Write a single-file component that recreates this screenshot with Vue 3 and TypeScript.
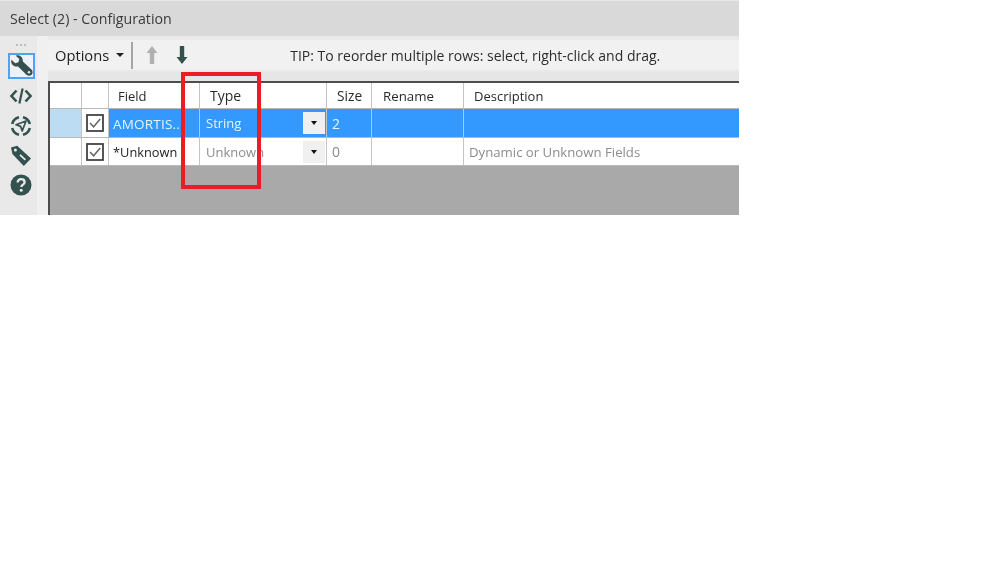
<script setup lang="ts">
interface Row {
  field: string
  type: string
  size: string
  description: string
  selected: boolean
}

const rows: Row[] = [
  { field: 'AMORTIS...', type: 'String', size: '2', description: '', selected: true },
  { field: '*Unknown', type: 'Unknown', size: '0', description: 'Dynamic or Unknown Fields', selected: false },
]
</script>

<template>
  <div class="panel">
    <div class="title">Select (2) - Configuration</div>
    <div class="body">
      <div class="rail">
        <div class="grip">
          <i></i><i></i><i></i>
        </div>
        <button class="tool active">
          <svg width="24" height="24" viewBox="0 0 24 24">
            <path d="M1.5 5.5 L5.5 9 L8.8 8 L9.8 4.6 L6 1.2 C9.6 -0.2 13.8 2.4 13.4 7.4 L22.4 15.6 C24 17.2 24 19.6 22.6 21 C21 22.6 18.6 22.4 17.2 21 L8.4 12.4 C3.8 13.4 0.2 9.8 1.5 5.5 Z" fill="#33514e" />
            <circle cx="19.8" cy="18.4" r="1.3" fill="#e9e9e9" />
          </svg>
        </button>
        <button class="tool">
          <svg width="24" height="20" viewBox="0 0 24 20" fill="none" stroke="#33514e" stroke-width="2.6">
            <path d="M7.5 4.5 L2.5 10 L7.5 15.5" />
            <path d="M16.5 4.5 L21.5 10 L16.5 15.5" />
            <path d="M13.6 2.5 L10.4 17.5" stroke-width="2.2" />
          </svg>
        </button>
        <button class="tool">
          <svg width="24" height="24" viewBox="0 0 24 24" fill="none" stroke="#33514e">
            <path d="M3.2 10 A9 9 0 0 1 10 3.2 M14 3.2 A9 9 0 0 1 20.8 10 M20.8 14 A9 9 0 0 1 14 20.8 M10 20.8 A9 9 0 0 1 3.2 14" stroke-width="2.6" />
            <path d="M17 7 L13.2 17 L11.6 12.4 L7 10.8 Z" fill="none" stroke-width="1.7" stroke-linejoin="round" />
          </svg>
        </button>
        <button class="tool">
          <svg width="24" height="24" viewBox="0 0 24 24">
            <path d="M2 3.5 L8.2 1.8 L22 14.4 L14.8 22 L3.4 10 Z" fill="#33514e" />
            <path d="M11 10.8 L16.4 15.8" stroke="#e9e9e9" stroke-width="1.8" />
            <circle cx="6.4" cy="6" r="1.5" fill="#e9e9e9" />
          </svg>
        </button>
        <button class="tool help">
          <svg width="22" height="22" viewBox="0 0 22 22">
            <circle cx="11" cy="11" r="10.5" fill="#33514e" />
            <path d="M7.6 8.6 C7.6 6.4 9.2 5.2 11.1 5.2 C13.1 5.2 14.6 6.4 14.6 8.2 C14.6 10.6 11.3 10.6 11.3 13" fill="none" stroke="#e9e9e9" stroke-width="2.3" />
            <circle cx="11.2" cy="16.2" r="1.5" fill="#e9e9e9" />
          </svg>
        </button>
      </div>
      <div class="rail-gap"></div>
      <div class="main">
        <div class="toolbar">
          <span class="options">Options</span>
          <span class="caret"></span>
          <span class="sep"></span>
          <svg class="arrow" width="12" height="20" viewBox="0 0 12 20">
            <path d="M6 1 L11.5 8 L8.2 8 L8.2 19 L3.8 19 L3.8 8 L0.5 8 Z" fill="#b0b0b0" />
          </svg>
          <svg class="arrow" width="12" height="20" viewBox="0 0 12 20">
            <path d="M6 19 L11.5 12 L8.2 12 L8.2 1 L3.8 1 L3.8 12 L0.5 12 Z" fill="#33514e" />
          </svg>
          <span class="tip">TIP: To reorder multiple rows: select, right-click and drag.</span>
        </div>
        <div class="strip"></div>
        <div class="table">
          <div class="tr head">
            <div class="c"></div>
            <div class="c"></div>
            <div class="c field">Field</div>
            <div class="c type">Type</div>
            <div class="c size">Size</div>
            <div class="c rename">Rename</div>
            <div class="c desc">Description</div>
          </div>
          <div v-for="row in rows" :key="row.field" class="tr" :class="{ selected: row.selected }">
            <div class="c marker"></div>
            <div class="c check">
              <svg width="18" height="18" viewBox="0 0 18 18">
                <rect x="1" y="1" width="16" height="16" fill="#fff" stroke="#444" stroke-width="1.8" />
                <path d="M4 9 L7.6 12.8 L14.2 5" fill="none" stroke="#666" stroke-width="1.5" />
              </svg>
            </div>
            <div class="c field-val">{{ row.field }}</div>
            <div class="c type-val">
              <span>{{ row.type }}</span>
              <span class="drop"><b></b></span>
            </div>
            <div class="c size-val">{{ row.size }}</div>
            <div class="c"></div>
            <div class="c desc-val">{{ row.description }}</div>
          </div>
          <div class="empty"></div>
        </div>
      </div>
    </div>
    <div class="highlight"></div>
  </div>
</template>

<style scoped>
.panel {
  position: relative;
  width: 739px;
  height: 215px;
  background: #e9e9e9;
  font-family: "Open Sans", "Noto Sans", sans-serif;
  font-size: 13px;
  color: #222;
  display: flex;
  flex-direction: column;
  overflow: hidden;
  filter: blur(0.35px);
}

.title {
  height: 35px;
  margin-top: 1px;
  padding-left: 10px;
  background: #d9d9d9;
  color: #3a3a3a;
  font-size: 14.2px;
  line-height: 35px;
  flex: none;
}

.body {
  flex: 1;
  display: flex;
  min-height: 0;
}

.rail {
  width: 37px;
  flex: none;
  box-sizing: border-box;
  padding-top: 6px;
  padding-left: 5px;
  display: flex;
  flex-direction: column;
  align-items: center;
}

.grip {
  display: flex;
  gap: 2px;
  height: 11px;
}

.grip i {
  width: 2px;
  height: 2px;
  margin-top: 2px;
  background: #bdbdbd;
}

.tool {
  width: 27px;
  height: 26px;
  flex: none;
  margin-bottom: 4px;
  padding: 0;
  border: 1px solid transparent;
  background: none;
  display: flex;
  align-items: center;
  justify-content: center;
}

.tool.active {
  border: 2px solid #4da3f5;
  background: #eef2f6;
}

.tool.help {
  margin-top: -1px;
}

.rail-gap {
  width: 11px;
  flex: none;
  background: #f0f0f0;
}

.main {
  flex: 1;
  min-width: 0;
  display: flex;
  flex-direction: column;
}

.toolbar {
  height: 30px;
  margin-top: 4px;
  padding-left: 7px;
  background: #f1f1f1;
  display: flex;
  align-items: center;
  flex: none;
}

.options {
  font-size: 14.7px;
}

.caret {
  margin-left: 7px;
  border: 4px solid transparent;
  border-top: 4px solid #222;
  border-bottom: none;
}

.sep {
  width: 2px;
  height: 27px;
  margin-left: 7px;
  margin-right: 13px;
  background: #a6a6a6;
}

.arrow {
  margin-right: 18px;
}

.tip {
  margin-left: 84px;
  font-size: 14px;
  color: #2c2c2c;
}

.strip {
  height: 9px;
  margin-top: 2px;
  background: #e6e6e6;
  border-bottom: 2px solid #4d4d4d;
  box-sizing: content-box;
  flex: none;
}

.table {
  flex: 1;
  display: flex;
  flex-direction: column;
  border-left: 2px solid #4d4d4d;
  background: #a9a9a9;
}

.tr {
  display: grid;
  grid-template-columns: 32px 27px 91px 127px 45px 92px 1fr;
  height: 28px;
  flex: none;
  background: #fff;
  border-bottom: 1px solid #b9b9b9;
  box-sizing: border-box;
}

.tr.head {
  height: 26px;
}

.tr.selected {
  height: 29px;
}

.c {
  border-right: 1px solid #c4c4c4;
  display: flex;
  align-items: center;
  min-width: 0;
  white-space: nowrap;
}

.c:last-child {
  border-right: none;
}

.field { padding-left: 9px; }
.type { padding-left: 10px; font-size: 14px; }
.size { padding-left: 10px; font-size: 13.7px; }
.rename { padding-left: 11px; font-size: 13.3px; }
.desc { padding-left: 10px; }

.head .c {
  color: #2a2a2a;
}

.marker {
  background: #fff;
}

.check {
  justify-content: center;
  padding-right: 1px;
}

.field-val {
  padding-left: 4px;
  padding-top: 1px;
  font-size: 12.8px;
}

.selected .field-val {
  font-size: 13.5px;
  letter-spacing: 0.2px;
}

.type-val {
  padding-left: 6px;
  justify-content: space-between;
  color: #8c8c8c;
}

.size-val {
  padding-left: 5px;
  color: #8c8c8c;
  font-size: 14px;
}

.desc-val {
  padding-left: 5px;
  color: #8c8c8c;
  font-size: 13.2px;
}

.drop {
  width: 22px;
  height: 22px;
  margin-right: 1px;
  background: #f0f0f0;
  display: flex;
  align-items: center;
  justify-content: center;
}

.drop b {
  border: 3.5px solid transparent;
  border-top: 4px solid #111;
  border-bottom: none;
}

.tr.selected {
  background: #3399ff;
}

.tr.selected .c {
  color: #e8f3ff;
}

.tr.selected .marker {
  background: #bbdcf3;
}

.tr.selected .check {
  background: #fff;
}

.empty {
  flex: 1;
}

.highlight {
  position: absolute;
  left: 181px;
  top: 72px;
  width: 80px;
  height: 117px;
  box-sizing: border-box;
  border: 4px solid #ed1c24;
  pointer-events: none;
}
</style>

<style>
html, body {
  background: #fff;
}
</style>
